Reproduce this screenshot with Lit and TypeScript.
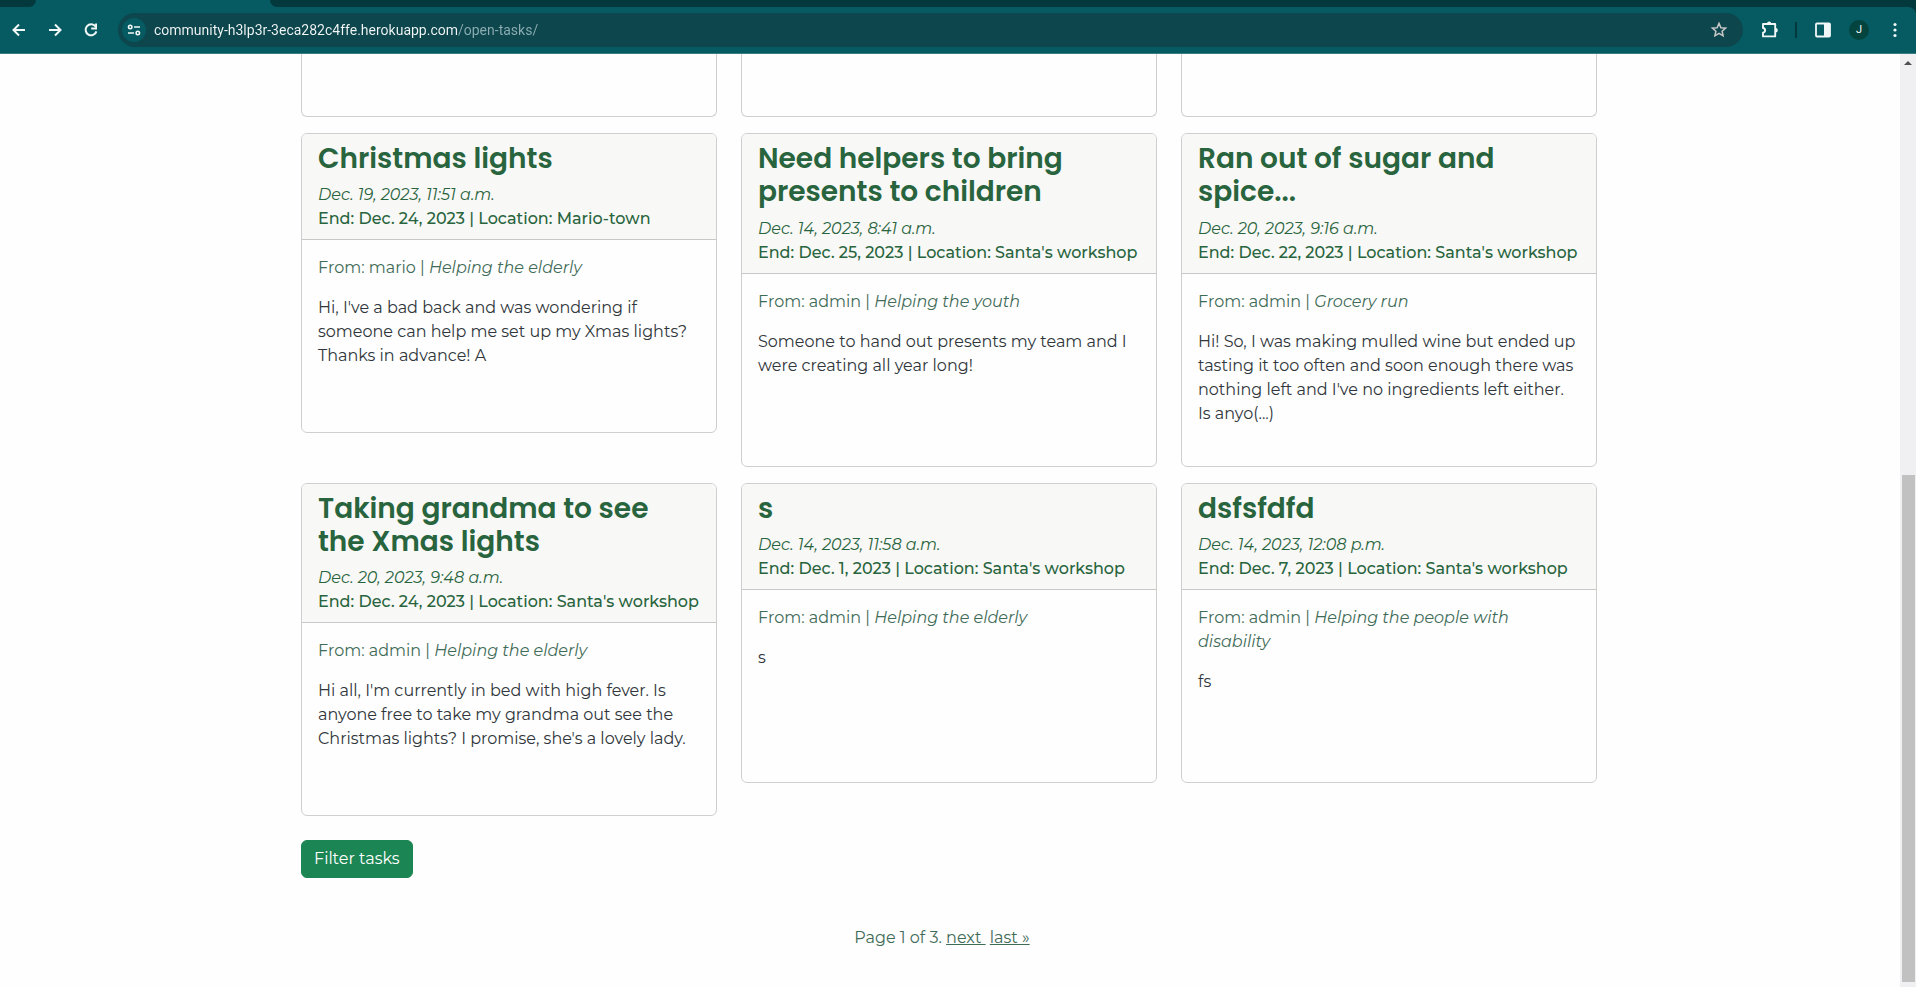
import { LitElement, html, css, svg } from "lit";
import { customElement, property } from "lit/decorators.js";

interface Task {
  title: string;
  created: string;
  end: string;
  location: string;
  author: string;
  category: string;
  text: string;
}

const TASKS: Task[] = [
  {
    title: "Christmas lights",
    created: "Dec. 19, 2023, 11:51 a.m.",
    end: "Dec. 24, 2023",
    location: "Mario-town",
    author: "mario",
    category: "Helping the elderly",
    text: "Hi, I've a bad back and was wondering if someone can help me set up my Xmas lights? Thanks in advance! A",
  },
  {
    title: "Need helpers to bring presents to children",
    created: "Dec. 14, 2023, 8:41 a.m.",
    end: "Dec. 25, 2023",
    location: "Santa's workshop",
    author: "admin",
    category: "Helping the youth",
    text: "Someone to hand out presents my team and I were creating all year long!",
  },
  {
    title: "Ran out of sugar and spice...",
    created: "Dec. 20, 2023, 9:16 a.m.",
    end: "Dec. 22, 2023",
    location: "Santa's workshop",
    author: "admin",
    category: "Grocery run",
    text: "Hi! So, I was making mulled wine but ended up tasting it too often and soon enough there was nothing left and I've no ingredients left either. Is anyo(...)",
  },
  {
    title: "Taking grandma to see the Xmas lights",
    created: "Dec. 20, 2023, 9:48 a.m.",
    end: "Dec. 24, 2023",
    location: "Santa's workshop",
    author: "admin",
    category: "Helping the elderly",
    text: "Hi all, I'm currently in bed with high fever. Is anyone free to take my grandma out see the Christmas lights? I promise, she's a lovely lady.",
  },
  {
    title: "s",
    created: "Dec. 14, 2023, 11:58 a.m.",
    end: "Dec. 1, 2023",
    location: "Santa's workshop",
    author: "admin",
    category: "Helping the elderly",
    text: "s",
  },
  {
    title: "dsfsfdfd",
    created: "Dec. 14, 2023, 12:08 p.m.",
    end: "Dec. 7, 2023",
    location: "Santa's workshop",
    author: "admin",
    category: "Helping the people with disability",
    text: "fs",
  },
];

const stroke = (d: string) => svg`<path d=${d} fill="none" stroke="currentColor" stroke-width="2"/>`;

@customElement("browser-bar")
class BrowserBar extends LitElement {
  static styles = css`
    :host {
      display: block;
      background: #03393c;
      font-family: Roboto, "Open Sans", sans-serif;
    }
    .tabs {
      display: flex;
      height: 7px;
      background: #055b61;
    }
    .tab-rest {
      background: #03393c;
    }
    .tab-left {
      width: 36px;
      border-bottom-right-radius: 7px;
    }
    .tab-active {
      width: 234px;
    }
    .tab-right {
      flex: 1;
      border-bottom-left-radius: 7px;
    }
    .bar {
      display: flex;
      align-items: center;
      height: 46px;
      padding: 0 11px 0 6px;
      background: #055b61;
      border-bottom: 1px solid #3a7c81;
      border-top-right-radius: 8px;
    }
    button {
      display: grid;
      place-items: center;
      flex: none;
      padding: 0;
      border: 0;
      background: none;
      color: #f2f7f7;
      font: inherit;
    }
    svg {
      display: block;
    }
    .nav {
      display: flex;
      gap: 10px;
    }
    .nav button {
      width: 26px;
      height: 26px;
    }
    .pill {
      display: flex;
      align-items: center;
      flex: 1;
      height: 34px;
      margin-left: 14px;
      padding: 0 14px 0 4px;
      gap: 8px;
      border-radius: 17px;
      background: #0d464d;
    }
    .pill .site {
      width: 24px;
      height: 24px;
      border-radius: 12px;
      background: #055b61;
    }
    .url {
      flex: 1;
      min-width: 0;
      padding: 0;
      border: 0;
      outline: 0;
      font: 14px/20px Roboto, "Open Sans", sans-serif;
      color: transparent;
      background: linear-gradient(to right, #f4f8f8 303px, #8caeb3 303px);
      background-clip: text;
      -webkit-background-clip: text;
    }
    .pill .star {
      width: 20px;
      color: #c9c9c9;
    }
    .tools {
      display: flex;
      align-items: center;
      gap: 16px;
      margin-left: 16px;
    }
    .tools button {
      width: 20px;
      height: 20px;
    }
    .rule {
      width: 2px;
      height: 16px;
      background: #03393c;
    }
    .tools .avatar {
      border-radius: 10px;
      background: #04443f;
      font-size: 11px;
      line-height: 20px;
    }
  `;

  render() {
    return html`
      <div class="tabs">
        <div class="tab-rest tab-left"></div>
        <div class="tab-active"></div>
        <div class="tab-rest tab-right"></div>
      </div>
      <div class="bar">
        <div class="nav">
          <button aria-label="Back">
            <svg width="16" height="16" viewBox="0 0 16 16">${stroke("M14 8H3M8 2.5 2.5 8 8 13.5")}</svg>
          </button>
          <button aria-label="Forward">
            <svg width="16" height="16" viewBox="0 0 16 16">${stroke("M2 8h11M8 2.5 13.5 8 8 13.5")}</svg>
          </button>
          <button aria-label="Reload">
            <svg width="16" height="16" viewBox="0 0 16 16">
              ${stroke("M12.6 4.6A5.5 5.5 0 1 0 13.4 9.4")}
              <path d="M14 1.5v6H8.2V5.6h3.9V1.5z" fill="currentColor" />
            </svg>
          </button>
        </div>
        <div class="pill">
          <button class="site" aria-label="Site information">
            <svg width="14" height="14" viewBox="0 0 14 14" fill="none" stroke="currentColor" stroke-width="1.6">
              <circle cx="3.2" cy="4" r="1.7" />
              <path d="M7 4h6M1 10h6" />
              <circle cx="10.8" cy="10" r="1.7" />
            </svg>
          </button>
          <input class="url" aria-label="Address" value="community-h3lp3r-3eca282c4ffe.herokuapp.com/open-tasks/" />
          <button class="star" aria-label="Bookmark this page">
            <svg width="18" height="18" viewBox="0 0 18 18">
              <path
                d="M9 2.4l1.9 4.3 4.7.4-3.5 3.1 1 4.6L9 12.3l-4.1 2.5 1-4.6-3.5-3.1 4.7-.4z"
                fill="none"
                stroke="currentColor"
                stroke-width="1.5"
              />
            </svg>
          </button>
        </div>
        <div class="tools">
          <button aria-label="Extensions">
            <svg width="20" height="20" viewBox="0 0 20 20">
              <path
                d="M4 4h12.2v12.4H4v-3.8c2.8-.4 2.8-4.2 0-4.6z"
                fill="none"
                stroke="currentColor"
                stroke-width="1.9"
                stroke-linejoin="round"
              />
              <path d="M8 3.6a2.1 2.2 0 0 1 4.2 0zM16.6 8a2.2 2.2 0 0 1 0 4.4z" fill="currentColor" />
            </svg>
          </button>
          <span class="rule"></span>
          <button aria-label="Side panel">
            <svg width="16" height="16" viewBox="0 0 16 16">
              <rect x="1" y="1.5" width="14" height="13" rx="1" fill="none" stroke="currentColor" stroke-width="1.8" />
              <path d="M9 1.5h6v13H9z" fill="currentColor" />
            </svg>
          </button>
          <button class="avatar" aria-label="Profile">J</button>
          <button aria-label="Menu">
            <svg width="4" height="16" viewBox="0 0 4 16" fill="currentColor">
              <circle cx="2" cy="2.5" r="1.6" />
              <circle cx="2" cy="8" r="1.6" />
              <circle cx="2" cy="13.5" r="1.6" />
            </svg>
          </button>
        </div>
      </div>
    `;
  }
}

@customElement("task-card")
class TaskCard extends LitElement {
  @property({ attribute: false }) task!: Task;

  static styles = css`
    :host {
      display: block;
      border: 1px solid #cfcfcf;
      border-radius: 6px;
      overflow: hidden;
    }
    .head {
      padding: 8px 16px;
      background: #f8f8f6;
      border-bottom: 1px solid #c8c8c8;
      color: #28643d;
    }
    h2 {
      margin: 0 0 8px;
      font: 600 28px/1.19 "Poppins", "Inter", sans-serif;
    }
    .created,
    .category {
      font-style: italic;
    }
    .created {
      display: block;
    }
    .end {
      display: block;
      font-weight: 500;
    }
    .body {
      min-height: 160px;
      padding: 16px;
    }
    p {
      margin: 0 0 16px;
    }
    .from {
      color: #3f6b57;
    }
  `;

  render() {
    const t = this.task;
    return html`
      <div class="head">
        <h2>${t.title}</h2>
        <span class="created">${t.created}</span>
        <strong class="end">End: ${t.end} | Location: ${t.location}</strong>
      </div>
      <div class="body">
        <p class="from">From: ${t.author} | <span class="category">${t.category}</span></p>
        <p>${t.text}</p>
      </div>
    `;
  }
}

@customElement("app-root")
class AppRoot extends LitElement {
  static styles = css`
    :host {
      display: flex;
      flex-direction: column;
      height: 100vh;
      overflow: hidden;
      background: #fefefe;
      color: #30363b;
      font: 400 16px/24px "Montserrat", "Inter", sans-serif;
    }
    .view {
      display: flex;
      flex: 1;
      min-height: 0;
    }
    .page {
      flex: 1;
      min-width: 0;
      overflow: hidden;
    }
    .container {
      max-width: 1296px;
      margin: 0 auto;
      padding: 0 12px;
    }
    .grid {
      display: grid;
      grid-template-columns: repeat(3, minmax(0, 1fr));
      align-items: start;
      gap: 16px 24px;
    }
    .above {
      height: 62px;
      border: 1px solid #cfcfcf;
      border-top: 0;
      border-radius: 0 0 6px 6px;
    }
    .filter {
      margin: 24px 0 48px;
      padding: 6px 12px;
      border: 1px solid #1b8553;
      border-radius: 6px;
      background: #1b8553;
      color: #fff;
      font: 400 16px/24px "Montserrat", "Inter", sans-serif;
    }
    .pages {
      padding-right: 14px;
      text-align: center;
      color: #3f6b57;
    }
    .pages a {
      color: inherit;
      white-space: pre;
    }
    .scroll {
      display: grid;
      grid-template-rows: 421fr 507fr 5px;
      width: 16px;
      border-left: 2px solid #fefefe;
      background: #f0f0f2;
    }
    .arrow {
      justify-self: center;
      margin-top: 7px;
    }
    .thumb {
      margin: 0 1px 0 2px;
      background: #c1c1c1;
    }
  `;

  render() {
    return html`
      <browser-bar></browser-bar>
      <div class="view">
        <main class="page">
          <div class="container">
            <div class="grid">
              <div class="above"></div>
              <div class="above"></div>
              <div class="above"></div>
              ${TASKS.map((t) => html`<task-card .task=${t}></task-card>`)}
            </div>
            <button class="filter">Filter tasks</button>
            <nav class="pages" aria-label="Pages">
              <span>Page 1 of 3.</span> <a href="#next">next </a> <a href="#last">last »</a>
            </nav>
          </div>
        </main>
        <div class="scroll">
          <svg class="arrow" width="8" height="4" viewBox="0 0 8 4"><path d="M0 4 4 0l4 4z" fill="#505050" /></svg>
          <div class="thumb"></div>
        </div>
      </div>
    `;
  }
}
